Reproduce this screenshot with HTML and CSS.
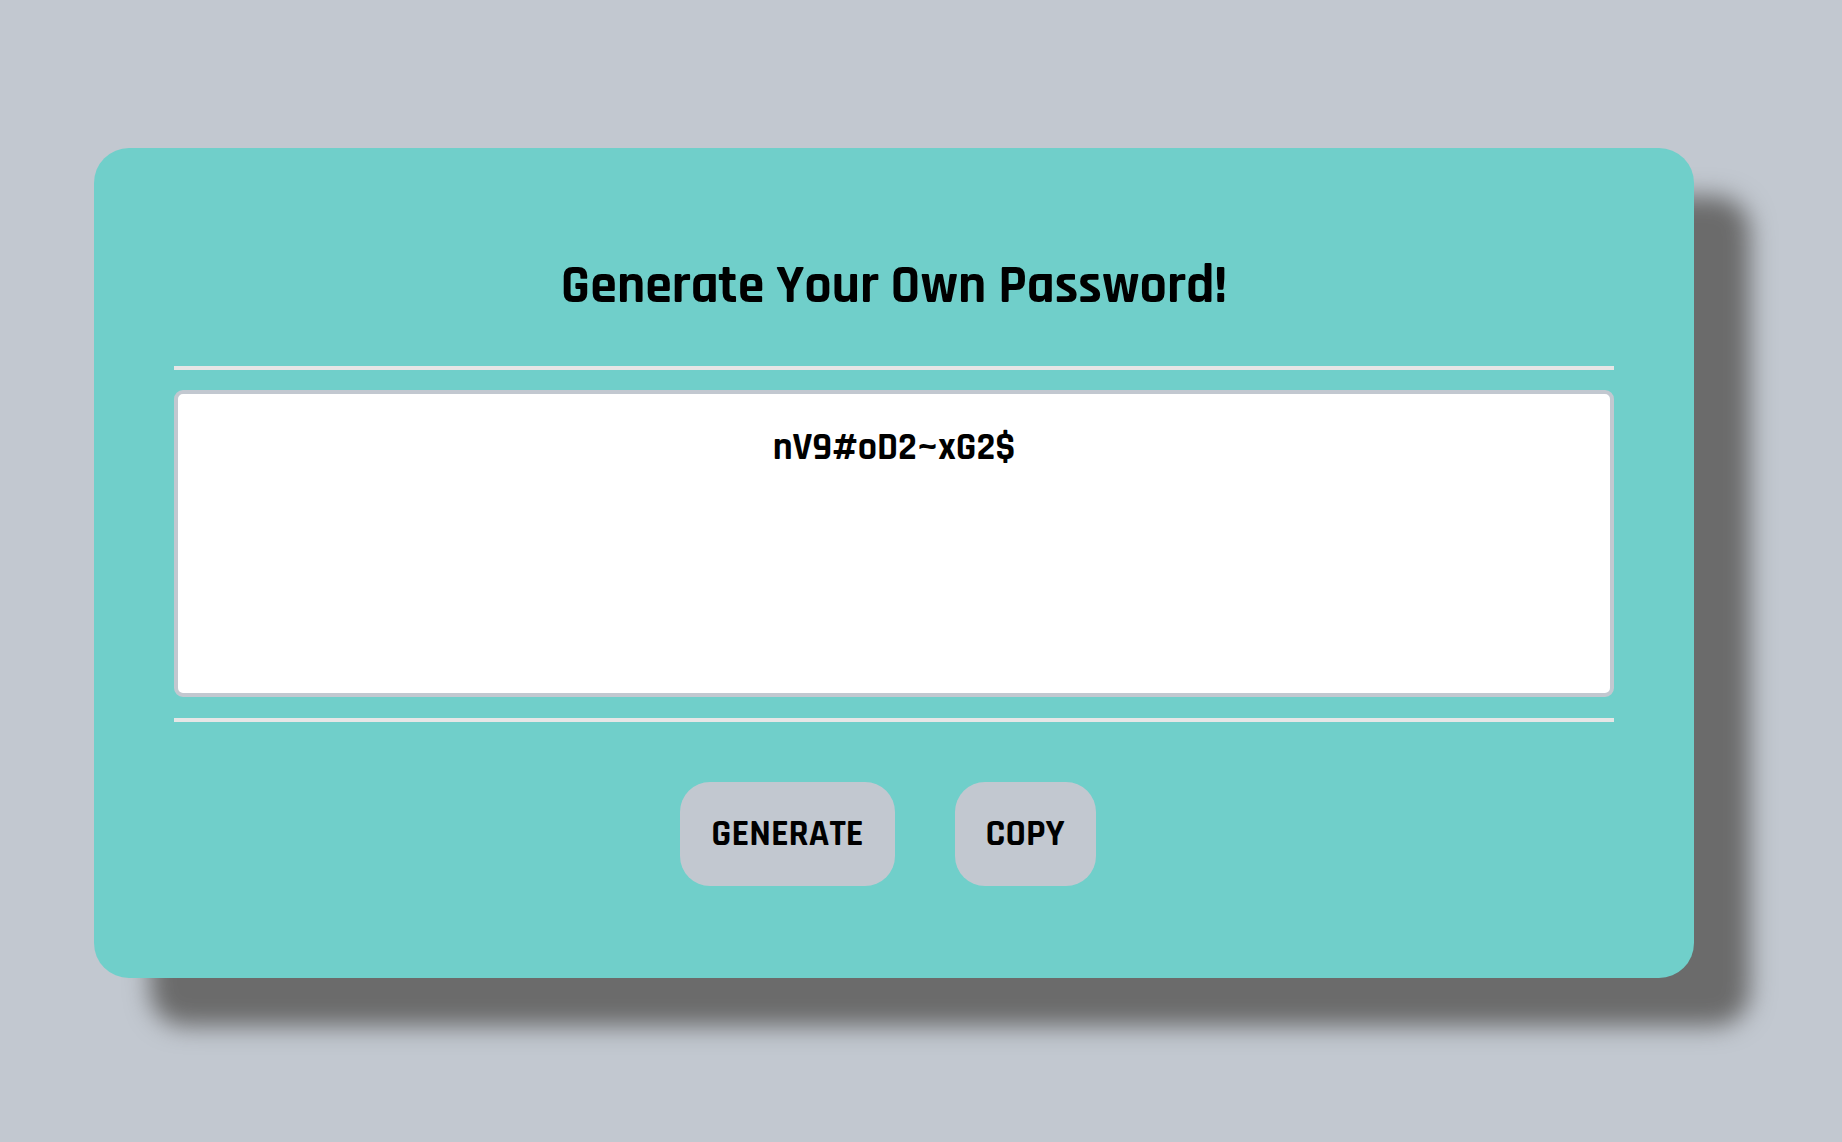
FILE: index.html
```html
<!DOCTYPE html>
<html lang="en">
<head>
<meta charset="utf-8">
<title>Password Generator</title>
<link rel="stylesheet" href="styles.css">
</head>
<body>
<div class="wrapper">
  <div class="card">
    <h1 class="title">Generate Your Own Password!</h1>
    <hr class="rule">
    <textarea class="output" readonly>nV9#oD2~xG2$</textarea>
    <hr class="rule rule-bottom">
    <div class="actions">
      <button class="btn">GENERATE</button>
      <button class="btn">COPY</button>
    </div>
  </div>
</div>
</body>
</html>
```
FILE: styles.css
```css
html, body {
  margin: 0;
  padding: 0;
  background: #c2c8d0;
}
body {
  font-family: Rajdhani, "Liberation Sans", sans-serif;
  font-weight: 700;
  color: #000;
}
.wrapper {
  box-sizing: border-box;
  min-height: 1142px;
  padding: 148px 0 0 94px;
}
.card {
  box-sizing: border-box;
  width: 1600px;
  height: 830px;
  padding: 109px 80px 0;
  background: #70cfca;
  border-radius: 35px;
  box-shadow: 56px 48px 24px #6b6b6b;
}
.title {
  margin: 0;
  font-size: 54px;
  line-height: 60px;
  font-weight: 700;
  text-align: center;
}
.rule {
  margin: 49px 0 0;
  height: 4px;
  border: 0;
  background: #e6e6e6;
}
.output {
  display: block;
  box-sizing: border-box;
  width: 100%;
  height: 307px;
  margin: 20px 0 21px;
  padding: 32px 20px 0;
  border: 4px solid #c2c8d0;
  border-radius: 9px;
  background: #fff;
  resize: none;
  outline: none;
  font-family: inherit;
  font-weight: 700;
  font-size: 38px;
  line-height: 44px;
  text-align: center;
  color: #000;
}
.rule-bottom {
  margin-top: 0;
}
.actions {
  display: flex;
  justify-content: center;
  gap: 60px;
  margin-top: 60px;
  padding-right: 12px;
}
.btn {
  height: 104px;
  padding: 0 31px;
  border: 0;
  border-radius: 30px;
  background: #c2c8d0;
  font-family: inherit;
  font-weight: 700;
  font-size: 37px;
  color: #000;
  cursor: pointer;
}
```
